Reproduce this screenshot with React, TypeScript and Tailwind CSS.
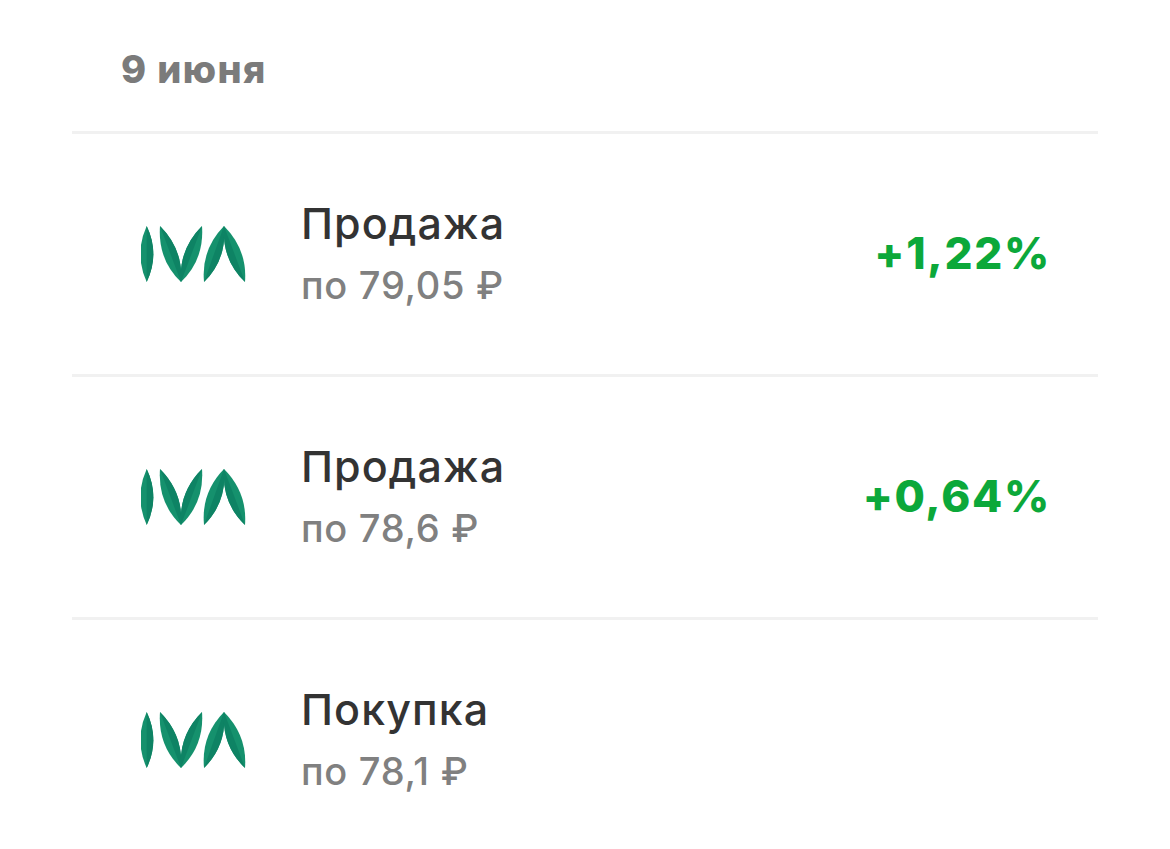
const deals = [
  { title: "Продажа", price: "по 79,05 ₽", gain: "+1,22%" },
  { title: "Продажа", price: "по 78,6 ₽", gain: "+0,64%" },
  { title: "Покупка", price: "по 78,1 ₽", gain: "" },
];

// each leaf is a lens: tip to tip, with one half a little darker
function Leaf({ tip, end, a, b }: { tip: string; end: string; a: string; b: string }) {
  return (
    <g>
      <path d={`M${tip}Q${a} ${end}Q${b} ${tip}Z`} fill="#15916d" />
      <path d={`M${tip}Q${b} ${end}Z`} fill="#0e8364" />
    </g>
  );
}

function IvaLogo() {
  return (
    <svg width="105" height="57" viewBox="0 0 105 57" className="shrink-0">
      <Leaf tip="5.700 0" end="5.700 56" a="-7 28" b="19 28" />
      <Leaf tip="19 0" end="40 56" a="16.500 33.500" b="42.500 23.500" />
      <Leaf tip="61 0" end="40 56" a="63.500 33.500" b="37.500 23.500" />
      <Leaf tip="83 0" end="63 56" a="60 23.500" b="86 33.500" />
      <Leaf tip="83 0" end="104 56" a="106.500 23.500" b="80.500 33.500" />
    </svg>
  );
}

export default function App() {
  return (
    <div className="w-[1170px] h-[849px] overflow-hidden bg-white font-['Inter','Liberation_Sans',sans-serif]">
      <div className="mx-[72px] w-[1026px]">
        <div className="h-[131px] pl-[49px] pt-[45px] text-[38px] leading-[48px] font-extrabold tracking-[1.4px] text-[#7b7b7b]">9 июня</div>
        {deals.map((deal, i) => (
          <div key={i} className="h-[243px] border-t-[3px] border-[#f1f1f1] flex items-center pl-[69px] pr-[49px]">
            <IvaLogo />
            <div className="ml-[55px] flex-1 -mt-[1px]">
              <div className="-mt-[1px] text-[43px] leading-[52px] font-medium tracking-[1.1px] text-[#333333]">{deal.title}</div>
              <div className="mt-[12px] text-[38px] leading-[48px] font-medium tracking-[0.7px] text-[#808080]">{deal.price}</div>
            </div>
            {deal.gain && <div className="-mt-[2px] -mr-[2px] text-[44px] leading-[52px] font-extrabold tracking-[1.7px] text-[#0ca83a]">{deal.gain}</div>}
          </div>
        ))}
      </div>
    </div>
  );
}
